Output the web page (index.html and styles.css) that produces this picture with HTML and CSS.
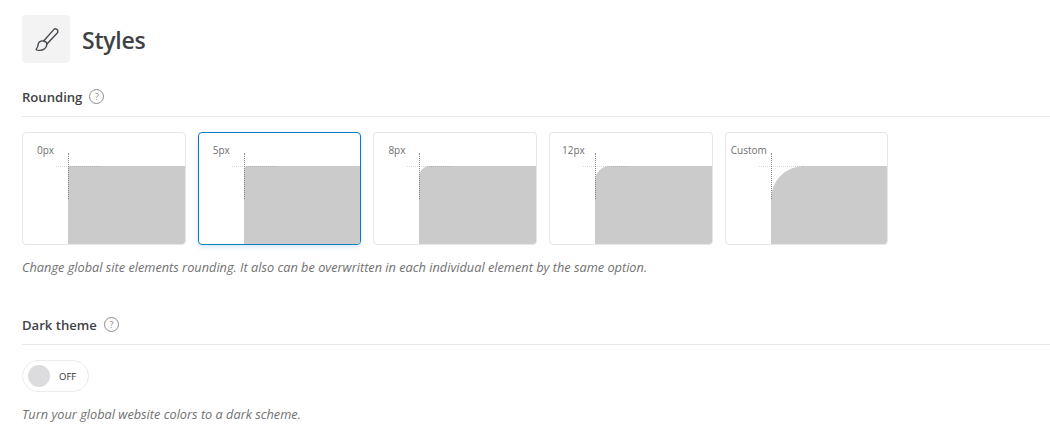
FILE: index.html
```html
<!DOCTYPE html>
<html lang="en">
<head>
<meta charset="utf-8">
<title>Styles</title>
<link rel="stylesheet" href="styles.css">
</head>
<body>
<header class="page-head">
  <div class="head-icon">
    <svg width="29" height="29" viewBox="0 0 24 24" fill="none" stroke="#45494d" stroke-width="1.15" stroke-linejoin="round" stroke-linecap="round">
      <path d="M9.6 13.2 L18.2 3.6 C19.2 2.6 21.6 3.6 21.4 5.6 C21.4 6 21.2 6.4 20.9 6.7 L12.4 15.8"/>
      <path d="M9.6 13.2 C7 13 5.2 14.4 5 16.6 C4.9 18 4.4 19 3.6 19.8 C3.2 20.6 4 21 5.4 21 C9 21.2 11.8 19.6 12.4 15.8 C12.2 14.4 11 13.4 9.6 13.2 Z"/>
    </svg>
  </div>
  <h1 class="page-title">Styles</h1>
</header>

<section class="rounding">
  <div class="section-head">
    <h2 class="section-title">Rounding</h2>
    <span class="help">?</span>
  </div>
  <div class="cards">
    <div class="card">
      <span class="card-label label-a">0px</span>
      <div class="guide-v"></div><div class="guide-h"></div>
      <div class="shape r0"></div>
    </div>
    <div class="card is-active">
      <span class="card-label label-a">5px</span>
      <div class="guide-v"></div><div class="guide-h"></div>
      <div class="shape r5"></div>
    </div>
    <div class="card">
      <span class="card-label label-a">8px</span>
      <div class="guide-v"></div><div class="guide-h"></div>
      <div class="shape r8"></div>
    </div>
    <div class="card">
      <span class="card-label label-b">12px</span>
      <div class="guide-v"></div><div class="guide-h"></div>
      <div class="shape r12"></div>
    </div>
    <div class="card">
      <span class="card-label label-c">Custom</span>
      <div class="guide-v"></div><div class="guide-h"></div>
      <div class="shape r30"></div>
    </div>
  </div>
  <p class="note">Change global site elements rounding. It also can be overwritten in each individual element by the same option.</p>
</section>

<section class="dark">
  <div class="section-head">
    <h2 class="section-title">Dark theme</h2>
    <span class="help">?</span>
  </div>
  <div class="toggle"><span class="knob"></span><span class="toggle-text">OFF</span></div>
  <p class="note note-dark">Turn your global website colors to a dark scheme.</p>
</section>
</body>
</html>
```
FILE: styles.css
```css
* { box-sizing: border-box; }
html, body { margin: 0; padding: 0; }
body {
  width: 1050px;
  height: 433px;
  overflow: hidden;
  padding: 15px 0 0 22px;
  background: #fff;
  font-family: "Open Sans", "Noto Sans", sans-serif;
  color: #3f4245;
}
.page-head { display: flex; align-items: center; gap: 12px; height: 48px; }
.head-icon {
  width: 48px; height: 48px;
  background: #f3f3f3;
  border-radius: 4px;
  display: flex; align-items: center; justify-content: center;
}
.page-title { margin: 0; padding-top: 2px; font-size: 23px; font-weight: 600; color: #3f4245; line-height: 48px; letter-spacing: -0.25px; }
.rounding { margin-top: 24px; }
.section-head {
  display: flex; align-items: center; gap: 7px;
  height: 30px;
  padding-bottom: 10px;
  border-bottom: 1px solid #e8e8e8;
}
.section-title { margin: 0; font-size: 13.1px; font-weight: 600; color: #3f4245; line-height: 18px; }
.help {
  width: 15px; height: 15px;
  border: 1px solid #8c8c8c;
  border-radius: 50%;
  font-size: 9px; line-height: 13px;
  text-align: center;
  color: #8c8c8c;
}
.cards { display: flex; gap: 12.2px; margin-top: 15px; }
.card {
  position: relative;
  width: 163.5px; height: 113px;
  background: #fff;
  border: 1px solid #e6e6e6;
  border-radius: 4px;
  overflow: hidden;
  padding: 33px 0 0 45px;
}
.card.is-active {
  border-color: #0a7cc0;
  box-shadow: 0 2px 5px rgba(10,124,192,.18);
  overflow: visible;
}
.card.is-active .shape { border-bottom-right-radius: 3px; }
.shape { width: auto; height: 100%; background: #cbcbcb; }
.r0 { border-radius: 0; }
.r5 { border-top-left-radius: 4px; }
.r8 { border-top-left-radius: 11px; }
.r12 { border-top-left-radius: 15px; }
.r30 { border-top-left-radius: 33px; }
.card-label { position: absolute; top: 10px; font-size: 10px; line-height: 14px; color: #6f6f6f; }
.label-a { left: 14px; }
.label-b { left: 12px; }
.label-c { left: 5px; }
.guide-v { position: absolute; left: 45px; top: 20px; height: 46px; border-left: 1px dotted #8a8a8a; }
.guide-h { position: absolute; left: 33px; top: 33px; width: 45px; border-top: 1px dotted rgba(120,120,120,.28); }
.note { margin: 14px 0 0; font-size: 12.75px; line-height: 16px; font-style: italic; color: #717171; }
.dark { margin-top: 40px; }
.toggle {
  display: flex; align-items: center; gap: 9px;
  width: 67px; height: 32px;
  margin-top: 15px;
  padding-left: 5px;
  border: 1px solid #ebebeb;
  border-radius: 16px;
}
.knob { width: 22px; height: 22px; border-radius: 50%; background: #dcdcde; }
.toggle-text { font-size: 9.5px; font-weight: 500; color: #333; }
.note-dark { margin-top: 14px; }
```
